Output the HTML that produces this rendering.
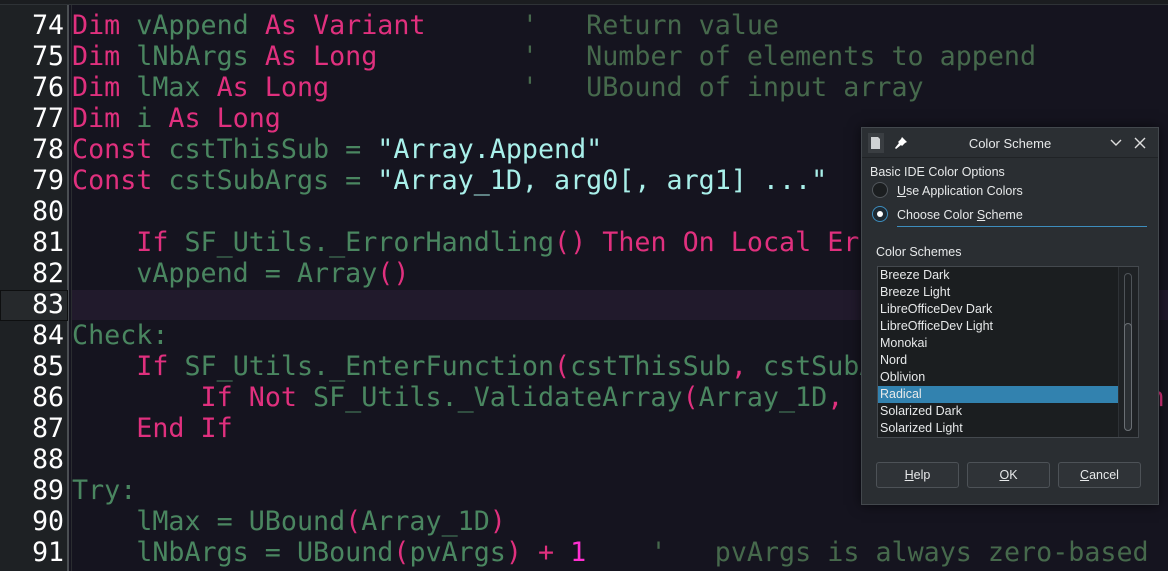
<!DOCTYPE html>
<html><head><meta charset="utf-8"><style>
*{margin:0;padding:0;box-sizing:border-box}
body{width:1168px;height:571px;overflow:hidden;background:#15141f;position:relative;font-family:"DejaVu Sans Mono","Liberation Mono",monospace}
#top{position:absolute;left:0;top:0;width:1168px;height:5px;background:#1b1d20;border-bottom:1px solid #2e3236}
#gut{position:absolute;left:0;top:5px;width:69px;height:566px;background:#1e2124;border-right:2px solid #4b4f53}
#sep{position:absolute;left:71px;top:5px;width:1px;height:566px;background:#2a2c30}
.ln{position:absolute;left:0;width:64px;text-align:right;color:#fff;font-size:26.5px;line-height:31px}
#hlg{position:absolute;left:0;top:290px;width:68px;height:31px;background:#26292c;border:1px solid #0e0f10}
#hlc{position:absolute;left:72px;top:290px;width:1096px;height:30px;background:#211a2c}
.code{position:absolute;left:72px;font-size:26.7px;line-height:31px;white-space:pre;color:#4a8660}
.k{color:#e0307e}.s{color:#a9f0ea}.c{color:#46694c}.n{color:#ff2fd0}.p{color:#e0307e}
#dlg{position:absolute;left:861px;top:127px;width:298px;height:378px;background:#2a2e32;border:1px solid #43484d;font-family:"Liberation Sans","DejaVu Sans",sans-serif;color:#e7e9ea;font-size:12.5px;box-shadow:0 0 12px rgba(0,0,0,.6)}
#tb{height:30px;border-bottom:1px solid #202326;background:#2b2f33;position:relative}
#tb .t{position:absolute;left:0;right:0;top:8px;text-align:center;font-size:13px}
.u{text-decoration:underline}
.abs{position:absolute}
.radio{position:absolute;width:16px;height:16px;border-radius:50%;border:1px solid #52575c;background:#1b1e20}
#list{position:absolute;left:15px;top:138px;width:262px;height:172px;background:#1b1e20;border:1px solid #44494e}
.it{height:17px;line-height:17px;padding-left:2px;font-size:12.5px}
.btn{position:absolute;top:334px;width:83px;height:26px;border:1px solid #4d5257;border-radius:3px;background:#2f3337;text-align:center;line-height:24px;font-size:12.5px}
</style></head><body>
<div id="top"></div>
<div id="gut"></div>
<div id="hlc"></div>
<div id="hlg"></div>
<div id="sep"></div>
<div class="ln" style="top:10px">74</div>
<div class="ln" style="top:41px">75</div>
<div class="ln" style="top:72px">76</div>
<div class="ln" style="top:103px">77</div>
<div class="ln" style="top:134px">78</div>
<div class="ln" style="top:165px">79</div>
<div class="ln" style="top:196px">80</div>
<div class="ln" style="top:227px">81</div>
<div class="ln" style="top:258px">82</div>
<div class="ln" style="top:289px">83</div>
<div class="ln" style="top:320px">84</div>
<div class="ln" style="top:351px">85</div>
<div class="ln" style="top:382px">86</div>
<div class="ln" style="top:413px">87</div>
<div class="ln" style="top:444px">88</div>
<div class="ln" style="top:475px">89</div>
<div class="ln" style="top:506px">90</div>
<div class="ln" style="top:537px">91</div>
<div class="code" style="top:10px"><span class="k">Dim</span> vAppend <span class="k">As Variant</span>      <span class="c">'   Return value</span>
<span class="k">Dim</span> lNbArgs <span class="k">As Long</span>         <span class="c">'   Number of elements to append</span>
<span class="k">Dim</span> lMax <span class="k">As Long</span>            <span class="c">'   UBound of input array</span>
<span class="k">Dim</span> i <span class="k">As Long</span>
<span class="k">Const</span> cstThisSub = <span class="s">"Array.Append"</span>
<span class="k">Const</span> cstSubArgs = <span class="s">"Array_1D, arg0[, arg1] ..."</span>

    <span class="k">If</span> SF_Utils._ErrorHandling<span class="p">()</span> <span class="k">Then On Local Error GoTo Catch</span>
    vAppend = Array<span class="p">()</span>

Check:
    <span class="k">If</span> SF_Utils._EnterFunction<span class="p">(</span>cstThisSub<span class="p">,</span> cstSubArgs<span class="p">)</span> <span class="k">Then</span>
        <span class="k">If Not</span> SF_Utils._ValidateArray<span class="p">(</span>Array_1D<span class="p">,</span> <span class="s">"Array_1D"</span><span class="p">,</span> <span class="n">1</span><span class="p">)</span> <span class="k">Then</span>
    <span class="k">End If</span>

Try:
    lMax = UBound<span class="p">(</span>Array_1D<span class="p">)</span>
    lNbArgs = UBound<span class="p">(</span>pvArgs<span class="p">)</span> <span class="p">+</span> <span class="n">1</span>    <span class="c">'   pvArgs is always zero-based</span></div>

<div id="dlg">
 <div id="tb">
  <div class="abs" style="left:6px;top:5px;width:16px;height:20px;background:#3a3e42"></div>
  <svg class="abs" style="left:9px;top:9px" width="10" height="12" viewBox="0 0 10 12"><path d="M0 0H7L9 2V12H0Z" fill="#cfd2d4"/></svg>
  <svg class="abs" style="left:32px;top:8px" width="14" height="14" viewBox="0 0 14 14"><path d="M8 1L13 6L11 7L8 10L7 9L2 13L1 12L5 7L4 6L7 3Z" fill="#fff"/></svg>
  <div class="t">Color Scheme</div>
  <svg class="abs" style="left:248px;top:11px" width="12" height="8" viewBox="0 0 12 8"><path d="M1 1L6 6L11 1" stroke="#ddd" stroke-width="1.4" fill="none"/></svg>
  <svg class="abs" style="left:272px;top:9px" width="12" height="12" viewBox="0 0 12 12"><path d="M1 1L11 11M11 1L1 11" stroke="#ddd" stroke-width="1.4"/></svg>
 </div>
 <div class="abs" style="left:8px;top:37px">Basic IDE Color Options</div>
 <div class="radio" style="left:10px;top:54px"></div>
 <div class="abs" style="left:35px;top:56px"><span class="u">U</span>se Application Colors</div>
 <div class="radio" style="left:10px;top:78px;border-color:#3d8dbd;background:#1e2a33"><div style="position:absolute;left:4px;top:4px;width:6px;height:6px;border-radius:50%;background:#fff"></div></div>
 <div class="abs" style="left:35px;top:80px">Choose Color <span class="u">S</span>cheme</div>
 <div class="abs" style="left:35px;top:98px;width:250px;height:1px;background:#3d8dbd"></div>
 <div class="abs" style="left:14px;top:117px">Color Schemes</div>
 <div id="list">
  <div class="it">Breeze Dark</div><div class="it">Breeze Light</div><div class="it">LibreOfficeDev Dark</div><div class="it">LibreOfficeDev Light</div><div class="it">Monokai</div><div class="it">Nord</div><div class="it">Oblivion</div><div class="it" style="background:#3282af">Radical</div><div class="it">Solarized Dark</div><div class="it">Solarized Light</div>
  <div class="abs" style="right:0;top:0;width:20px;height:170px;border-left:1px solid #2e3236;background:#1f2225"></div>
  <div class="abs" style="right:6px;top:6px;width:8px;height:158px;border:1px solid #4e5358;border-radius:4px"></div>
  <div class="abs" style="right:6px;top:56px;width:8px;height:108px;border:1px solid #6a6f74;border-radius:4px;background:#2c3034"></div>
 </div>
 <div class="btn" style="left:14px"><span class="u">H</span>elp</div>
 <div class="btn" style="left:105px"><span class="u">O</span>K</div>
 <div class="btn" style="left:196px"><span class="u">C</span>ancel</div>
</div>
</body></html>
